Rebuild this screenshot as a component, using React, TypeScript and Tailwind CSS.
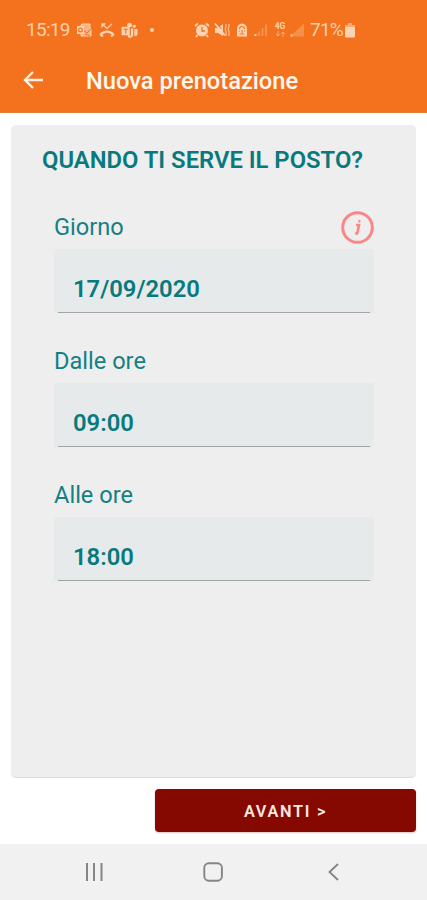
import type { ReactNode } from "react";

const fields = [
  { label: "Giorno", value: "17/09/2020", info: true },
  { label: "Dalle ore", value: "09:00", info: false },
  { label: "Alle ore", value: "18:00", info: false },
];

export default function App() {
  return (
    <div className="flex h-[900px] w-[427px] flex-col overflow-hidden bg-white font-['Roboto',sans-serif]">
      <header className="h-[113px] shrink-0 border-b border-[#e0803c] bg-[#f4721e]">
        <StatusBar />
        <div className="flex h-10 items-center pl-[23px]">
          <svg className="h-[18px] w-5" viewBox="0 0 20 18" fill="none" stroke="#fff2e6" strokeWidth="2.4">
            <path d="M20 9H2M10 1L2 9l8 8" />
          </svg>
          <h1 className="ml-[43px] pt-[2px] text-[23.7px] leading-7 font-medium whitespace-nowrap text-[#fff8f0]">
            Nuova prenotazione
          </h1>
        </div>
      </header>

      <main className="mt-3 ml-[11px] h-[653px] w-[405px] shrink-0 rounded-[5px] border-b border-[#dcdcdc] bg-[#eeeeee] pt-[21px]">
        <h2 className="pl-[31px] text-[23.8px] leading-7 font-semibold whitespace-nowrap text-[#087a7d]">
          QUANDO TI SERVE IL POSTO?
        </h2>
        <div className="mt-[38px] ml-[43px] flex w-[320px] flex-col gap-[33px]">
          {fields.map((field) => (
            <Field key={field.label} {...field} />
          ))}
        </div>
      </main>

      <div className="flex grow justify-end pt-[11px] pr-[11px]">
        <button className="h-[43px] w-[261px] rounded-[4px] bg-[#850900] pt-[3px] text-[16.3px] font-semibold tracking-[1.7px] text-[#fbe9e4] shadow-[0_1px_2px_#d9c4c0]">
          AVANTI &gt;
        </button>
      </div>

      <NavBar />
    </div>
  );
}

function Field({ label, value, info }: { label: string; value: string; info: boolean }) {
  return (
    <div className="h-[101px]">
      <div className="flex h-[37px] items-start justify-between">
        <label className="text-[23.6px] leading-[30px] text-[#138083]">{label}</label>
        {info && <InfoIcon />}
      </div>
      <div className="h-16 rounded-t-[3px] bg-[#e6eaeb] pr-1 pl-1">
        <div className="h-full border-b border-[#a0a5a5] pt-[25px] pl-[15px] text-[23.8px] leading-[30px] font-semibold text-[#087a7d]">
          {value}
        </div>
      </div>
    </div>
  );
}

function InfoIcon() {
  return (
    <svg className="-mt-px h-[33px] w-[33px]" viewBox="0 0 33 33" fill="none">
      <circle cx="16.5" cy="16.5" r="14.8" stroke="#f98788" strokeWidth="3" />
      <path d="M17.4 10.2h2M15 14h3l-1.7 8.4M14.2 22.4h3" stroke="#f98788" strokeWidth="2.6" />
    </svg>
  );
}

function Glyph({ className, children }: { className: string; children: ReactNode }) {
  return (
    <svg className={`shrink-0 ${className}`} viewBox="0 0 16 16" fill="none" stroke="#fdd3b1">
      {children}
    </svg>
  );
}

function StatusBar() {
  return (
    <div className="flex h-[60px] items-center pl-[26px] text-[19px] leading-5 text-[#fdd0ac]">
      <span className="w-[50px] tracking-[-0.7px]">15:19</span>
      {/* Outlook */}
      <Glyph className="h-4 w-4">
        <path d="M6 2h8v5h1v7H5V3z" fill="#fdd3b1" fillOpacity=".65" />
        <path d="M7 8l4 3 4-4M9 12l5 2" stroke="#f4721e" />
        <path d="M1 4h7v8H1z" fill="#fdd3b1" stroke="none" />
        <circle cx="4.5" cy="8" r="1.9" stroke="#f4721e" strokeWidth="1.2" />
      </Glyph>
      {/* Missed call */}
      <Glyph className="ml-[7px] h-4 w-4">
        <path d="M3 5.5V2h3.5M3 2l5 4.5L13 2" strokeWidth="1.3" />
        <path d="M1.5 12.8c3.5-4.2 9.500-4.200 13 0" strokeWidth="2.4" />
        <path d="M1 12.200l3 2.300M15 12.200l-3 2.300" strokeWidth="2" />
      </Glyph>
      {/* Teams */}
      <Glyph className="ml-[5px] h-[17px] w-[18px]">
        <circle cx="8.5" cy="3" r="2.3" fill="#fdd3b1" stroke="none" />
        <circle cx="13" cy="4" r="1.5" fill="#fdd3b1" stroke="none" />
        <path d="M7 6h5v6a3 3 0 0 1-5 2zM13 6.5h3V11c0 2-2 3-3 2z" fill="#fdd3b1" stroke="none" />
        <path d="M1 4.5h7.5v8H1z" fill="#fdd3b1" stroke="none" />
        <path d="M3 6.8h4M5 7v4M9.2 5v8" stroke="#f4721e" strokeWidth="1.1" />
      </Glyph>
      <span className="ml-[12px] h-1 w-1 rounded-full bg-[#fdd3b1]" />
      {/* Alarm */}
      <Glyph className="ml-[40px] h-4 w-4">
        <path d="M1 4l3-2.5M15 4l-3-2.5M3.5 13L2 15M12.5 13l1.5 2" strokeWidth="1.8" />
        <circle cx="8" cy="8.5" r="6" fill="#fdd3b1" stroke="none" />
        <path d="M8 5v4h3" stroke="#f4721e" strokeWidth="1.3" />
      </Glyph>
      {/* Muted, vibrating */}
      <Glyph className="ml-[4px] h-4 w-4">
        <path d="M1 6h3l5-4v12l-5-3H1z" fill="#fdd3b1" stroke="none" />
        <path d="M1 1.5l10 12" stroke="#fdd3b1" strokeWidth="1.8" />
        <path d="M2.500 1l5 6" stroke="#f4721e" strokeWidth="1" />
        <path d="M12 2v3l-1 2 1 2v5M15 2v3l-1 2 1 2v5" strokeWidth="1" />
      </Glyph>
      {/* Locked profile */}
      <Glyph className="ml-[4px] h-4 w-4">
        <path d="M3 14.5V7a5 5.5 0 0 1 10 0v7.5z" fill="#fdd3b1" stroke="none" />
        <path d="M5.5 7a2.5 2.5 0 0 1 5 0M5 9h1M10 9h1M8 8v3M5.5 12h5" stroke="#f4721e" strokeWidth="1.2" />
      </Glyph>
      <Glyph className="ml-[3px] h-4 w-4">
        <path d="M2.5 12v2" strokeWidth="2" />
        <path d="M6 9.5V14M9.5 6v8M13 2.5V14" strokeOpacity=".45" strokeWidth="1.4" />
      </Glyph>
      <div className="ml-[5px] flex h-4 w-3 flex-col items-center">
        <span className="text-[8.5px] leading-[9px] font-bold">4G</span>
        <svg className="h-[6px] w-[9px]" viewBox="0 0 9 6" fill="none" stroke="#fdd3b1" strokeOpacity=".55">
          <path d="M2 0v5M0 3l2 2 2-2M7 6V1M5 3l2-2 2 2" />
        </svg>
      </div>
      <Glyph className="ml-[3px] h-4 w-4">
        <path d="M1 14.5L15 1.5v13z" fill="#fdd3b1" fillOpacity=".3" stroke="none" />
        <path d="M2.5 12v2.5" strokeWidth="2" strokeOpacity=".7" />
      </Glyph>
      <span className="ml-[5px] w-[34px] tracking-[-0.8px]">71%</span>
      <svg className="ml-px h-[15px] w-[10px]" viewBox="0 0 10 15" fill="#fdd3b1">
        <path d="M3 0h4v2h3v3H0V2h3z" fillOpacity=".6" />
        <path d="M0 4h10v9.5a1 1 0 0 1-1 1H1a1 1 0 0 1-1-1z" />
      </svg>
    </div>
  );
}

function NavBar() {
  return (
    <nav className="flex h-14 shrink-0 items-center bg-[#f1f1f1]">
      <svg className="ml-[85px] h-[18px] w-[18px]" viewBox="0 0 18 18" stroke="#858585" strokeWidth="2">
        <path d="M2 0v18M9 0v18M16.5 0v18" />
      </svg>
      <svg className="ml-[100px] h-5 w-5" viewBox="0 0 20 20" fill="none" stroke="#858585" strokeWidth="1.9">
        <rect x="1.3" y="1.3" width="17.6" height="17.4" rx="4.5" />
      </svg>
      <svg className="ml-[105px] h-[18px] w-[11px]" viewBox="0 0 11 18" fill="none" stroke="#858585" strokeWidth="1.9">
        <path d="M10 1L1.5 9l8.5 8" />
      </svg>
    </nav>
  );
}
